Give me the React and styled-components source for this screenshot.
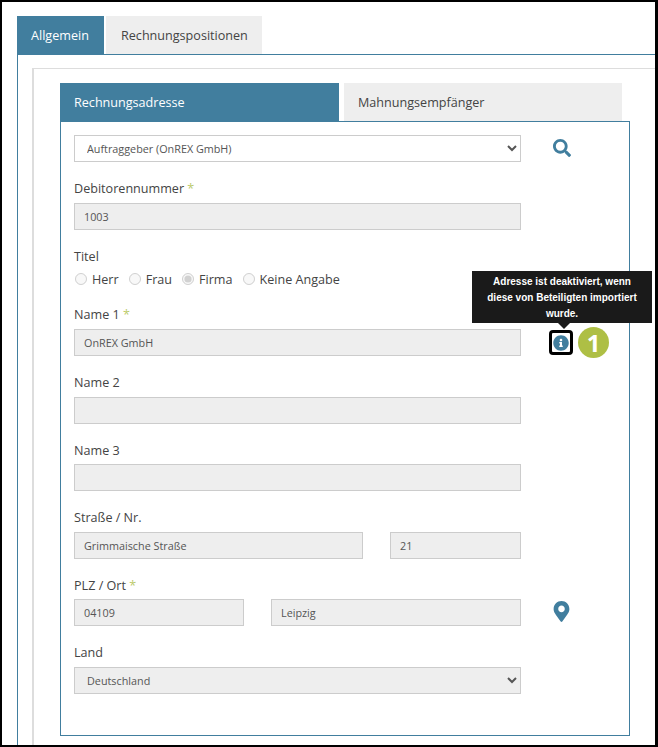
import React from "react";
import styled, { createGlobalStyle } from "styled-components";
import { FaSearch, FaInfoCircle, FaMapMarkerAlt } from "react-icons/fa";

const TEAL = "#417e9e";

const GlobalStyle = createGlobalStyle`
  html, body {
    margin: 0;
    padding: 0;
    background: #fff;
  }
  * {
    box-sizing: border-box;
  }
`;

const Frame = styled.div`
  width: 658px;
  height: 747px;
  overflow: hidden;
  border: 2px solid #000;
  border-right-width: 3px;
  background: #fff;
  padding: 14px 0 0 15px;
  font-family: "Open Sans", sans-serif;
  color: #444;
`;

const TabBar = styled.div`
  display: flex;
  gap: ${(p) => p.$gap}px;
`;

const Tab = styled.div`
  width: ${(p) => p.$width}px;
  height: 38px;
  display: flex;
  align-items: center;
  padding-left: ${(p) => p.$pad || 14}px;
  font-size: 12.6px;
  background: ${(p) => (p.$active ? TEAL : "#eeeeee")};
  color: ${(p) => (p.$active ? "#fff" : "#444")};
`;

const OuterPane = styled.div`
  height: 700px;
  border-top: 1px solid ${TEAL};
  border-left: 1px solid ${TEAL};
  padding: 13px 0 0 14px;
`;

const InnerBox = styled.div`
  height: 700px;
  border-top: 1px solid #ddd;
  border-left: 2px solid #ddd;
  padding: 14px 0 0 26px;
`;

const Panel = styled.div`
  width: 570px;
  height: 615px;
  border: 1px solid ${TEAL};
  padding: 13px;
`;

const Row = styled.div`
  display: flex;
  align-items: flex-end;
  margin-bottom: 16px;
`;

const Fields = styled.div`
  width: 447px;
  flex: none;
`;

const Label = styled.div`
  height: 20px;
  line-height: 22px;
  margin-bottom: 4.55px;
  font-size: 12.6px;
`;

const Star = styled.span`
  color: #bccb6c;
`;

const Pair = styled.div`
  display: grid;
  grid-template-columns: ${(p) => p.$columns};
  column-gap: 27px;
`;

const Input = styled.input`
  display: block;
  width: 100%;
  height: 27px;
  padding: 0 9px;
  border: 1px solid #ccc;
  border-radius: 0;
  outline: none;
  background: #eeeeee;
  font-family: "Open Sans", sans-serif;
  font-size: 10.8px;
  color: #555;
`;

const Select = styled.select`
  display: block;
  width: 100%;
  height: 27px;
  padding: 0 0 0 8px;
  border: 1px solid #ccc;
  border-radius: 0;
  outline: none;
  background-color: ${(p) => (p.disabled ? "#eeeeee" : "#fff")};
  font-family: "Open Sans", sans-serif;
  font-size: 10.8px;
  color: #555;
  opacity: 1;
`;

const RadioGroup = styled.div`
  height: 18.4px;
  display: flex;
  align-items: center;
  font-size: 12.6px;
`;

const RadioLabel = styled.label`
  display: flex;
  align-items: center;
  margin-right: 9px;
`;

const Radio = styled.input`
  width: 12px;
  height: 12px;
  margin: 0 5px 0 1px;
`;

const Side = styled.div`
  position: relative;
  height: 27px;
  margin-left: ${(p) => p.$offset}px;
  padding-bottom: ${(p) => p.$raise || 0}px;
  display: flex;
  align-items: center;
  color: ${TEAL};
`;

const InfoBox = styled.div`
  position: relative;
  width: 24px;
  height: 25px;
  border: 3px solid #000;
  border-radius: 4px;
  display: flex;
  align-items: center;
  justify-content: center;
  color: ${TEAL};
  font-size: 16px;
`;

const Tooltip = styled.div`
  position: absolute;
  left: -80px;
  bottom: 29px;
  width: 180px;
  height: 52px;
  padding: 3px 8px;
  background: #1a1a1a;
  color: #fff;
  text-align: center;
  font-family: "Liberation Sans", sans-serif;
  font-size: 10px;
  font-weight: 700;
  line-height: 16px;

  &::after {
    content: "";
    position: absolute;
    left: 86px;
    top: 100%;
    border: 6px solid transparent;
    border-bottom-width: 0;
    border-top-color: #1a1a1a;
  }
`;

const Badge = styled.div`
  width: 31px;
  height: 31px;
  margin-left: 5px;
  border-radius: 50%;
  background: #aebf45;
  color: #fff;
  display: flex;
  align-items: center;
  justify-content: center;
  font-family: "Open Sans", sans-serif;
  font-size: 24px;
  font-weight: 700;
`;

const Titles = ["Herr", "Frau", "Firma", "Keine Angabe"];

const Field = ({ label, required, children }) => (
  <div>
    <Label>
      {label}
      {required && <Star> *</Star>}
    </Label>
    {children}
  </div>
);

const Text = ({ value }) => <Input type="text" value={value} disabled readOnly />;

const App = () => {
  return (
    <Frame>
      <GlobalStyle />
      <TabBar $gap={2}>
        <Tab $width={87} $active>Allgemein</Tab>
        <Tab $width={156} $pad={15}>Rechnungspositionen</Tab>
      </TabBar>
      <OuterPane>
        <InnerBox>
          <TabBar $gap={5}>
            <Tab $width={279} $active>Rechnungsadresse</Tab>
            <Tab $width={278}>Mahnungsempfänger</Tab>
          </TabBar>
          <Panel>
            <Row>
              <Fields>
                <Select defaultValue="a">
                  <option value="a">Auftraggeber (OnREX GmbH)</option>
                </Select>
              </Fields>
              <Side $offset={32} $raise={2}>
                <FaSearch size={18} />
              </Side>
            </Row>
            <Row>
              <Fields>
                <Field label="Debitorennummer" required>
                  <Text value="1003" />
                </Field>
              </Fields>
            </Row>
            <Row>
              <Fields>
                <Field label="Titel">
                  <RadioGroup>
                    {Titles.map((t) => (
                      <RadioLabel key={t}>
                        <Radio type="radio" name="titel" disabled defaultChecked={t === "Firma"} />
                        {t}
                      </RadioLabel>
                    ))}
                  </RadioGroup>
                </Field>
              </Fields>
            </Row>
            <Row>
              <Fields>
                <Field label="Name 1" required>
                  <Text value="OnREX GmbH" />
                </Field>
              </Fields>
              <Side $offset={28}>
                <InfoBox>
                  <FaInfoCircle />
                  <Tooltip>
                    Adresse ist deaktiviert, wenn diese von Beteiligten importiert wurde.
                  </Tooltip>
                </InfoBox>
                <Badge>1</Badge>
              </Side>
            </Row>
            <Row>
              <Fields>
                <Field label="Name 2">
                  <Text value="" />
                </Field>
              </Fields>
            </Row>
            <Row>
              <Fields>
                <Field label="Name 3">
                  <Text value="" />
                </Field>
              </Fields>
            </Row>
            <Row>
              <Fields>
                <Field label="Straße / Nr.">
                  <Pair $columns="289px 131px">
                    <Text value="Grimmaische Straße" />
                    <Text value="21" />
                  </Pair>
                </Field>
              </Fields>
            </Row>
            <Row>
              <Fields>
                <Field label="PLZ / Ort" required>
                  <Pair $columns="170px 250px">
                    <Text value="04109" />
                    <Text value="Leipzig" />
                  </Pair>
                </Field>
              </Fields>
              <Side $offset={30} $raise={2}>
                <FaMapMarkerAlt size={21} />
              </Side>
            </Row>
            <Row>
              <Fields>
                <Field label="Land">
                  <Select defaultValue="de" disabled>
                    <option value="de">Deutschland</option>
                  </Select>
                </Field>
              </Fields>
            </Row>
          </Panel>
        </InnerBox>
      </OuterPane>
    </Frame>
  );
};

export default App;
